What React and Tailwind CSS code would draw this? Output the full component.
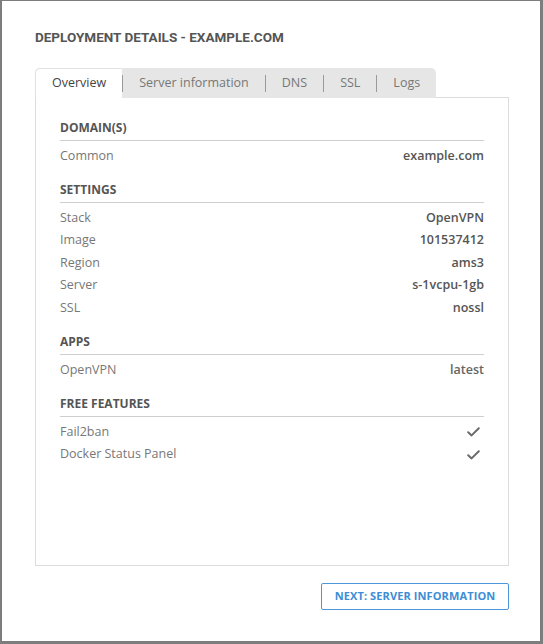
import React from 'react';

const sections = [
  { title: 'Domain(s)', rows: [['Common', 'example.com']] },
  {
    title: 'Settings',
    rows: [
      ['Stack', 'OpenVPN'],
      ['Image', '101537412'],
      ['Region', 'ams3'],
      ['Server', 's-1vcpu-1gb'],
      ['SSL', 'nossl'],
    ],
  },
  { title: 'Apps', rows: [['OpenVPN', 'latest']], light: true },
  {
    title: 'Free features',
    rows: [
      ['Fail2ban', true],
      ['Docker Status Panel', true],
    ],
  },
];

const tabs = ['Server information', 'DNS', 'SSL', 'Logs'];

function Check() {
  return (
    <svg width="13" height="10" viewBox="0 0 13 10" fill="none">
      <path d="M1.2 5.2 L4.6 8.4 L11.8 1.2" stroke="#6b6b6b" strokeWidth="2" strokeLinecap="round" strokeLinejoin="round" />
    </svg>
  );
}

export default function App() {
  return (
    <div className="h-screen bg-[#7d7d7d] pl-[2px] pt-[1px] pr-[3px] pb-[3px]">
      <div className="h-full bg-white pl-[33px] pr-[31px] pt-[26px] flex flex-col" style={{ fontFamily: '"Open Sans", sans-serif' }}>
        <h1 className="text-[13.5px] leading-[20px] font-bold text-[#555] uppercase" style={{ fontFamily: 'Roboto, sans-serif' }}>
          Deployment Details - example.com
        </h1>

        {/* Tabs */}
        <div className="mt-[21px] flex items-stretch h-[30px]">
          <div className="flex items-stretch bg-[#e6e6e6] rounded-t-[5px]">
            <div className="bg-white rounded-tl-[5px] border-l border-t border-[#e2e2e2] pl-[16px] pr-[16px] flex items-center text-[12.5px] text-[#444]">
              Overview
            </div>
            {tabs.map((t) => (
              <div key={t} className="flex items-center">
                <span className="w-px h-[17px] bg-[#9a9a9a]" />
                <span className="px-[16px] text-[12.5px] text-[#777]">{t}</span>
              </div>
            ))}
          </div>
          <div className="flex-1 border-b border-[#dcdcdc]" />
        </div>

        {/* Panel */}
        <div className="h-[468px] border border-t-0 border-[#dcdcdc] pt-[21px] px-[24px]">
          {sections.map((s, si) => (
            <div key={s.title} className={si === 0 ? '' : 'mt-[13.5px]'}>
              <div className="text-[12px] leading-[18px] font-bold uppercase text-[#555] pb-[3px] border-b border-[#cfcfcf]">
                {s.title}
              </div>
              <div className="mt-[4px]">
                {s.rows.map(([label, value]) => (
                  <div key={label} className="flex justify-between items-center h-[22.5px] text-[12.5px]">
                    <span className="text-[#777]">{label}</span>
                    {value === true ? (
                      <span className="pr-[4px]"><Check /></span>
                    ) : (
                      <span className={s.light ? 'text-[#666] font-semibold' : 'text-[#555] font-semibold'}>{value}</span>
                    )}
                  </div>
                ))}
              </div>
            </div>
          ))}
        </div>

        <div className="mt-[17px] flex justify-end">
          <button className="h-[27px] w-[188px] border border-[#4a97d9] rounded-[2px] text-[11px] font-bold uppercase text-[#3b8ed6] tracking-[0.01em]">
            Next: Server information
          </button>
        </div>
      </div>
    </div>
  );
}
